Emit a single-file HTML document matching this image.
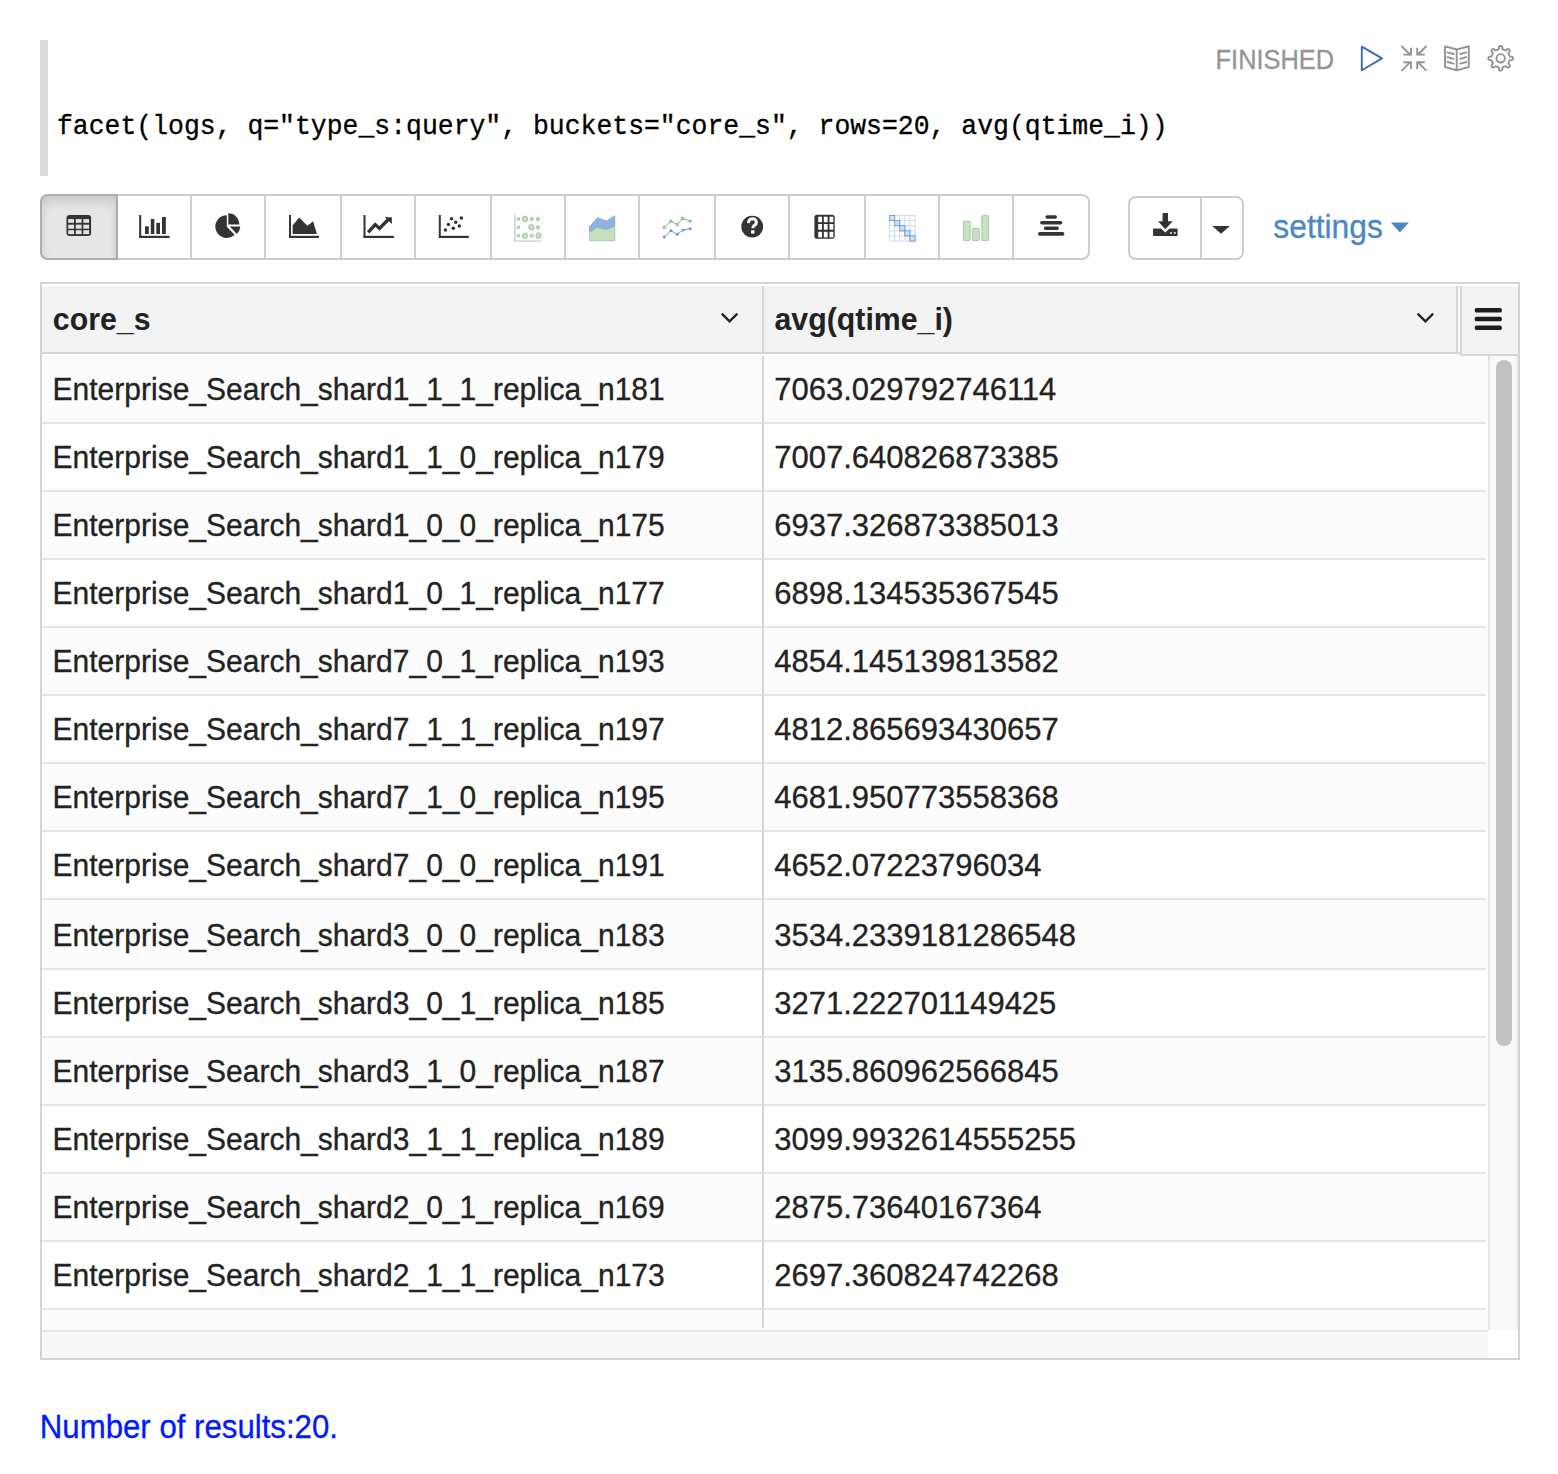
<!DOCTYPE html>
<html><head><meta charset="utf-8"><title>Zeppelin paragraph</title>
<style>
html,body{margin:0;padding:0;background:#fff;}
body{width:1558px;height:1474px;position:relative;overflow:hidden;font-family:"Liberation Sans",sans-serif;color:#222;}
.a{position:absolute;}
.t{position:absolute;line-height:1;white-space:pre;-webkit-text-stroke:0.3px currentColor;}
.sy{transform:scaleY(1.055);transform-origin:0 84.65%;}
svg{position:absolute;left:0;top:0;overflow:visible;}
</style></head>
<body>
<div class="a" style="left:40px;top:40px;width:8px;height:136px;background:#dcdcdc"></div>
<div class="t" style="left:57px;top:114.0px;font-family:'Liberation Mono',monospace;font-size:26.45px;color:#000;transform:scaleY(1.07);transform-origin:0 20px">facet(logs, q=&quot;type_s:query&quot;, buckets=&quot;core_s&quot;, rows=20, avg(qtime_i))</div>
<div class="t sy" style="left:1215.6px;top:48.3px;font-size:25.4px;color:#959595">FINISHED</div>
<svg width="1558" height="280" viewBox="0 0 1558 280">
<g fill="none" stroke-linecap="round" stroke-linejoin="round">
<path d="M1361.8 46.6 L1382 58.4 L1361.8 70.2 Z" stroke="#3a6fa8" stroke-width="1.9"/>
<g stroke="#929292" stroke-width="1.9" stroke-linecap="butt" stroke-linejoin="miter">
<path d="M1401.5 46 L1410 54.5 M1403.4 54.6 H1411 V47.8"/>
<path d="M1426.5 46 L1418 54.5 M1424.8 54.6 H1417.2 V47.8"/>
<path d="M1401.5 70.8 L1410 62.3 M1403.4 62.2 H1411 V69"/>
<path d="M1426.5 70.8 L1418 62.3 M1424.8 62.2 H1417.2 V69"/>
</g>
<g stroke="#929292" stroke-width="1.9">
<path d="M1456.7 49.5 L1445 46.3 V67 L1456.7 70.4 L1468.8 67 V46.3 Z M1456.7 49.5 V70.4"/>
<path d="M1447.5 52.4 L1453.6 54 M1447.5 57.2 L1453.6 58.8 M1447.5 62 L1453.6 63.6 M1460.2 54 L1466.2 52.4 M1460.2 58.8 L1466.2 57.2 M1460.2 63.6 L1466.2 62"/>
<path d="M1498.91 49.11 L1498.91 47.75 A1.75 1.75 0 0 1 1502.41 47.75 L1502.41 49.11 Q1503.99 50.31 1505.95 50.58 L1506.92 49.62 A1.75 1.75 0 0 1 1509.39 52.09 L1508.43 53.06 Q1508.70 55.02 1509.90 56.60 L1511.26 56.60 A1.75 1.75 0 0 1 1511.26 60.10 L1509.90 60.10 Q1508.70 61.68 1508.43 63.64 L1509.39 64.61 A1.75 1.75 0 0 1 1506.92 67.08 L1505.95 66.12 Q1503.99 66.39 1502.41 67.59 L1502.41 68.95 A1.75 1.75 0 0 1 1498.91 68.95 L1498.91 67.59 Q1497.33 66.39 1495.37 66.12 L1494.40 67.08 A1.75 1.75 0 0 1 1491.93 64.61 L1492.89 63.64 Q1492.62 61.68 1491.42 60.10 L1490.06 60.10 A1.75 1.75 0 0 1 1490.06 56.60 L1491.42 56.60 Q1492.62 55.02 1492.89 53.06 L1491.93 52.09 A1.75 1.75 0 0 1 1494.40 49.62 L1495.37 50.58 Q1497.33 50.31 1498.91 49.11 Z"/>
<circle cx="1500.66" cy="58.35" r="4.2"/>
</g>
</g>
<defs><linearGradient id="shd" x1="0" y1="0" x2="0" y2="1"><stop offset="0" stop-color="#cdcdcd"/><stop offset="0.25" stop-color="#e2e2e2"/><stop offset="1" stop-color="#e6e6e6"/></linearGradient></defs>
<rect x="41" y="195" width="1048" height="64" rx="7" ry="7" fill="#fff" stroke="#ccc" stroke-width="2"/>
<rect x="190" y="194" width="2" height="66" fill="#ccc"/>
<rect x="264" y="194" width="2" height="66" fill="#ccc"/>
<rect x="340" y="194" width="2" height="66" fill="#ccc"/>
<rect x="414" y="194" width="2" height="66" fill="#ccc"/>
<rect x="490" y="194" width="2" height="66" fill="#ccc"/>
<rect x="564" y="194" width="2" height="66" fill="#ccc"/>
<rect x="638" y="194" width="2" height="66" fill="#ccc"/>
<rect x="714" y="194" width="2" height="66" fill="#ccc"/>
<rect x="788" y="194" width="2" height="66" fill="#ccc"/>
<rect x="864" y="194" width="2" height="66" fill="#ccc"/>
<rect x="938" y="194" width="2" height="66" fill="#ccc"/>
<rect x="1012" y="194" width="2" height="66" fill="#ccc"/>
<g fill="#333"><rect x="139.2" y="215" width="2" height="23"/><rect x="139.2" y="235.8" width="30.4" height="2.2"/><rect x="145" y="226.3" width="3.8" height="7.7"/><rect x="150.8" y="219" width="3.5" height="15"/><rect x="156.3" y="222.8" width="3.7" height="11.2"/><rect x="162" y="217" width="3.8" height="17"/></g>
<g fill="#333"><path d="M226.8 215.2 V226.8 L234.6 234.8 A11.4 11.4 0 1 1 226.8 215.2 Z"/><path d="M228.3 213.3 A11 11 0 0 1 239.3 224.6 H228.3 Z"/><path d="M229.8 226.6 H240.3 A11 11 0 0 1 236.8 234 Z"/></g>
<g fill="#333"><rect x="289" y="215" width="2" height="23"/><rect x="289" y="235.8" width="30" height="2.2"/><path d="M292.6 233.9 V225.4 L299.2 217.4 L307.4 225.8 L313.1 221.2 L316.9 233.9 Z"/></g>
<g fill="#333"><rect x="363.5" y="215" width="2" height="23"/><rect x="363.5" y="235.8" width="30.4" height="2.2"/><path d="M384.7 217.2 H391.8 V224 Z"/></g><path d="M368.2 232.3 L375.2 224.6 L379.5 228.4 L388.5 219.3" fill="none" stroke="#333" stroke-width="3.4"/>
<g fill="#333"><rect x="438.8" y="215" width="2" height="23"/><rect x="438.8" y="235.8" width="30" height="2.2"/><circle cx="445.4" cy="230.1" r="1.75"/><circle cx="448.4" cy="224.4" r="1.75"/><circle cx="451.5" cy="218.8" r="1.75"/><circle cx="453.3" cy="228.2" r="1.75"/><circle cx="455.7" cy="222.2" r="1.75"/><circle cx="459.3" cy="226.1" r="1.75"/><circle cx="461.4" cy="218.0" r="1.75"/></g>
<path d="M514.8 214.8 V241 H541" fill="none" stroke="#b7bfd6" stroke-width="1.2"/><g fill="#c8e2c2" stroke="#86b882" stroke-width="0.8"><circle cx="518.4" cy="219.0" r="1.4"/><circle cx="525.0" cy="219.0" r="2.7"/><circle cx="531.7" cy="219.0" r="1.6"/><circle cx="538.0" cy="219.0" r="1.6"/><circle cx="518.4" cy="227.3" r="1.3"/><circle cx="531.4" cy="227.3" r="2.7"/><circle cx="538.0" cy="227.3" r="1.6"/><circle cx="518.4" cy="235.7" r="1.4"/><circle cx="525.0" cy="235.7" r="2.7"/><circle cx="531.7" cy="235.7" r="1.6"/><circle cx="538.5" cy="235.7" r="2.7"/></g>
<path d="M589.4 226.8 L597.4 217.7 L606.6 220.9 L614.8 215.8 V226.1 L606.6 229.7 L597.4 227.5 L589.4 232.2 Z" fill="#8fb2e6" stroke="#6f95d0" stroke-width="0.6"/><path d="M589.4 232.2 L597.4 227.5 L606.6 229.7 L614.8 226.1 V240.7 H589.4 Z" fill="#c6e1c1" stroke="#8cbc88" stroke-width="0.6"/>
<path d="M664.2 227.5 L670.9 221.2 L677.2 224.7 L682.6 218.4 L690.2 221.2" fill="none" stroke="#6fa872" stroke-width="0.9"/><path d="M664.2 237.0 L670.9 230.8 L677.2 234.3 L683.1 229.9 L690.2 228.7" fill="none" stroke="#5f8ad6" stroke-width="0.9"/><g fill="#b9dcb6" stroke="#6fae6c" stroke-width="0.8"><circle cx="664.2" cy="227.5" r="1.3"/><circle cx="670.9" cy="221.2" r="1.3"/><circle cx="677.2" cy="224.7" r="1.3"/><circle cx="682.6" cy="218.4" r="1.3"/><circle cx="690.2" cy="221.2" r="1.3"/></g><g fill="#6a92da"><circle cx="664.2" cy="237.0" r="1.5"/><circle cx="670.9" cy="230.8" r="1.5"/><circle cx="677.2" cy="234.3" r="1.5"/><circle cx="683.1" cy="229.9" r="1.5"/><circle cx="690.2" cy="228.7" r="1.5"/></g>
<circle cx="752.2" cy="226.6" r="10.9" fill="#333"/><path d="M748.4 223.1 Q748.8 218.8 752.4 218.8 Q756.4 218.9 756.3 222.4 Q756.2 224.6 753.9 225.7 Q752.9 226.3 752.9 228.3" fill="none" stroke="#fff" stroke-width="3"/><rect x="751.1" y="230.3" width="3.4" height="3.3" fill="#fff"/>
<rect x="814.4" y="214.8" width="20.3" height="24" rx="2.5" fill="#333"/><rect x="818.2" y="216.7" width="3.8" height="5.5" fill="#fff"/><rect x="818.2" y="224.0" width="3.8" height="5.7" fill="#fff"/><rect x="818.2" y="231.8" width="3.8" height="5.6" fill="#fff"/><rect x="823.8" y="216.7" width="3.8" height="5.5" fill="#fff"/><rect x="823.8" y="224.0" width="3.8" height="5.7" fill="#fff"/><rect x="823.8" y="231.8" width="3.8" height="5.6" fill="#fff"/><rect x="829.5" y="216.7" width="3.8" height="5.5" fill="#fff"/><rect x="829.5" y="224.0" width="3.8" height="5.7" fill="#fff"/><rect x="829.5" y="231.8" width="3.8" height="5.6" fill="#fff"/>
<g><rect x="889.5" y="215.5" width="5.1" height="5.1" fill="#c9e4fb" stroke="#7a9ad6" stroke-width="0.9"/><rect x="894.6" y="220.6" width="5.1" height="5.1" fill="#c9e4fb" stroke="#7a9ad6" stroke-width="0.9"/><rect x="899.7" y="225.7" width="5.1" height="5.1" fill="#c9e4fb" stroke="#7a9ad6" stroke-width="0.9"/><rect x="904.8" y="230.8" width="5.1" height="5.1" fill="#c9e4fb" stroke="#7a9ad6" stroke-width="0.9"/><rect x="909.9" y="235.9" width="5.1" height="5.1" fill="#c9e4fb" stroke="#7a9ad6" stroke-width="0.9"/><path d="M889.5 215.5 V241.0 M889.5 215.5 H915.0 M894.6 215.5 V241.0 M889.5 220.6 H915.0 M899.7 215.5 V241.0 M889.5 225.7 H915.0 M904.8 215.5 V241.0 M889.5 230.8 H915.0 M909.9 215.5 V241.0 M889.5 235.9 H915.0 M915.0 215.5 V241.0 M889.5 241.0 H915.0" fill="none" stroke="#c5d1e6" stroke-width="0.8"/><rect x="889.5" y="215.5" width="5.1" height="5.1" fill="#c9e4fb" stroke="#7a9ad6" stroke-width="0.9"/><rect x="894.6" y="220.6" width="5.1" height="5.1" fill="#c9e4fb" stroke="#7a9ad6" stroke-width="0.9"/><rect x="899.7" y="225.7" width="5.1" height="5.1" fill="#c9e4fb" stroke="#7a9ad6" stroke-width="0.9"/><rect x="904.8" y="230.8" width="5.1" height="5.1" fill="#c9e4fb" stroke="#7a9ad6" stroke-width="0.9"/><rect x="909.9" y="235.9" width="5.1" height="5.1" fill="#c9e4fb" stroke="#7a9ad6" stroke-width="0.9"/></g>
<g fill="#c6e1c1" stroke="#97c393" stroke-width="0.8"><rect x="963.3" y="221.2" width="6.9" height="19.3" rx="0.8"/><rect x="972.4" y="228.3" width="6.9" height="12.2" rx="0.8"/><rect x="981.8" y="215.4" width="6.9" height="25.1" rx="0.8"/></g>
<g stroke="#333" stroke-width="3.6" stroke-linecap="round"><path d="M1047.2 217 H1055.2 M1041.9 222.8 H1060.6 M1045.6 228.2 H1057.1 M1039.8 233.9 H1062.6"/></g>
<rect x="1129" y="197" width="114" height="62" rx="7" ry="7" fill="#fff" stroke="#ccc" stroke-width="2"/><rect x="1200" y="196" width="2" height="64" fill="#ccc"/>
<g fill="#333"><rect x="1162.6" y="213" width="5.4" height="10" rx="0.8"/><path d="M1158 221.3 H1172.7 L1165.3 229.2 Z"/><path d="M1154.2 228.4 H1161 L1165.3 232.4 L1169.6 228.4 H1176.6 Q1177.6 228.4 1177.6 229.4 V235 Q1177.6 235.9 1176.6 235.9 H1154 Q1153 235.9 1153 235 V229.4 Q1153 228.4 1154.2 228.4 Z"/></g><g fill="#fff"><rect x="1170.1" y="232.2" width="1.7" height="1.7"/><rect x="1173.9" y="232.2" width="1.7" height="1.7"/></g>
<path d="M1212.2 226 H1229.8 L1221 233.8 Z" fill="#333"/>
<path d="M1390.9 222.6 H1408.9 L1399.9 232.6 Z" fill="#4b87c5"/>
</svg>
<div class="a" style="left:40px;top:194px;width:74px;height:62px;border:2px solid #adadad;border-radius:8px 0 0 8px;background:#e6e6e6;box-shadow:inset 0 6px 10px rgba(0,0,0,.125)"></div>
<svg width="200" height="280"><rect x="66.5" y="215" width="24.6" height="21" rx="3" fill="#333"/>
<rect x="68.2" y="219.1" width="5.8" height="3.7" fill="#e4e4e4"/><rect x="68.2" y="224.7" width="5.8" height="4.0" fill="#e4e4e4"/><rect x="68.2" y="230.2" width="5.8" height="3.9" fill="#e4e4e4"/><rect x="75.8" y="219.1" width="5.8" height="3.7" fill="#e4e4e4"/><rect x="75.8" y="224.7" width="5.8" height="4.0" fill="#e4e4e4"/><rect x="75.8" y="230.2" width="5.8" height="3.9" fill="#e4e4e4"/><rect x="83.3" y="219.1" width="5.8" height="3.7" fill="#e4e4e4"/><rect x="83.3" y="224.7" width="5.8" height="4.0" fill="#e4e4e4"/><rect x="83.3" y="230.2" width="5.8" height="3.9" fill="#e4e4e4"/>
</svg>
<div class="t sy" style="left:1273.3px;top:212.4px;font-size:31.8px;color:#4b87c5">settings</div>
<div class="a" style="left:40px;top:282px;width:1476px;height:1074px;border:2px solid #d4d4d4;background:#fff"></div>
<div class="a" style="left:42px;top:286px;width:1418px;height:66px;background:#f3f3f3"></div>
<div class="a" style="left:42px;top:352px;width:1418px;height:2px;background:#d4d4d4"></div>
<div class="a" style="left:762px;top:286px;width:2px;height:66px;background:#d4d4d4"></div>
<div class="a" style="left:1456px;top:286px;width:2px;height:66px;background:#d4d4d4"></div>
<div class="a" style="left:1458px;top:286px;width:2px;height:66px;background:#f8f8f8"></div>
<div class="t sy" style="left:52.8px;top:305.15105px;font-size:30.3px;font-weight:bold;color:#222;-webkit-text-stroke:0">core_s</div>
<div class="t sy" style="left:774.5px;top:305.15105px;font-size:30.3px;font-weight:bold;color:#222;-webkit-text-stroke:0">avg(qtime_i)</div>
<div class="a" style="left:42px;top:354px;width:1446px;height:68px;background:#fcfcfc"></div><div class="a" style="left:42px;top:422px;width:1444px;height:2px;background:#e5e5e5"></div><div class="t sy" style="left:52.6px;top:374.6px;font-size:30px">Enterprise_Search_shard1_1_1_replica_n181</div><div class="t" style="left:774.2px;top:373.8px;font-size:31px">7063.029792746114</div>
<div class="a" style="left:42px;top:424px;width:1446px;height:66px;background:#fff"></div><div class="a" style="left:42px;top:490px;width:1444px;height:2px;background:#e5e5e5"></div><div class="t sy" style="left:52.6px;top:442.6px;font-size:30px">Enterprise_Search_shard1_1_0_replica_n179</div><div class="t" style="left:774.2px;top:441.8px;font-size:31px">7007.640826873385</div>
<div class="a" style="left:42px;top:492px;width:1446px;height:66px;background:#fcfcfc"></div><div class="a" style="left:42px;top:558px;width:1444px;height:2px;background:#e5e5e5"></div><div class="t sy" style="left:52.6px;top:510.6px;font-size:30px">Enterprise_Search_shard1_0_0_replica_n175</div><div class="t" style="left:774.2px;top:509.8px;font-size:31px">6937.326873385013</div>
<div class="a" style="left:42px;top:560px;width:1446px;height:66px;background:#fff"></div><div class="a" style="left:42px;top:626px;width:1444px;height:2px;background:#e5e5e5"></div><div class="t sy" style="left:52.6px;top:578.6px;font-size:30px">Enterprise_Search_shard1_0_1_replica_n177</div><div class="t" style="left:774.2px;top:577.8px;font-size:31px">6898.134535367545</div>
<div class="a" style="left:42px;top:628px;width:1446px;height:66px;background:#fcfcfc"></div><div class="a" style="left:42px;top:694px;width:1444px;height:2px;background:#e5e5e5"></div><div class="t sy" style="left:52.6px;top:646.6px;font-size:30px">Enterprise_Search_shard7_0_1_replica_n193</div><div class="t" style="left:774.2px;top:645.8px;font-size:31px">4854.145139813582</div>
<div class="a" style="left:42px;top:696px;width:1446px;height:66px;background:#fff"></div><div class="a" style="left:42px;top:762px;width:1444px;height:2px;background:#e5e5e5"></div><div class="t sy" style="left:52.6px;top:714.6px;font-size:30px">Enterprise_Search_shard7_1_1_replica_n197</div><div class="t" style="left:774.2px;top:713.8px;font-size:31px">4812.865693430657</div>
<div class="a" style="left:42px;top:764px;width:1446px;height:66px;background:#fcfcfc"></div><div class="a" style="left:42px;top:830px;width:1444px;height:2px;background:#e5e5e5"></div><div class="t sy" style="left:52.6px;top:782.6px;font-size:30px">Enterprise_Search_shard7_1_0_replica_n195</div><div class="t" style="left:774.2px;top:781.8px;font-size:31px">4681.950773558368</div>
<div class="a" style="left:42px;top:832px;width:1446px;height:66px;background:#fff"></div><div class="a" style="left:42px;top:898px;width:1444px;height:2px;background:#e5e5e5"></div><div class="t sy" style="left:52.6px;top:850.6px;font-size:30px">Enterprise_Search_shard7_0_0_replica_n191</div><div class="t" style="left:774.2px;top:849.8px;font-size:31px">4652.07223796034</div>
<div class="a" style="left:42px;top:900px;width:1446px;height:68px;background:#fcfcfc"></div><div class="a" style="left:42px;top:968px;width:1444px;height:2px;background:#e5e5e5"></div><div class="t sy" style="left:52.6px;top:920.6px;font-size:30px">Enterprise_Search_shard3_0_0_replica_n183</div><div class="t" style="left:774.2px;top:919.8px;font-size:31px">3534.2339181286548</div>
<div class="a" style="left:42px;top:970px;width:1446px;height:66px;background:#fff"></div><div class="a" style="left:42px;top:1036px;width:1444px;height:2px;background:#e5e5e5"></div><div class="t sy" style="left:52.6px;top:988.6px;font-size:30px">Enterprise_Search_shard3_0_1_replica_n185</div><div class="t" style="left:774.2px;top:987.8px;font-size:31px">3271.222701149425</div>
<div class="a" style="left:42px;top:1038px;width:1446px;height:66px;background:#fcfcfc"></div><div class="a" style="left:42px;top:1104px;width:1444px;height:2px;background:#e5e5e5"></div><div class="t sy" style="left:52.6px;top:1056.6px;font-size:30px">Enterprise_Search_shard3_1_0_replica_n187</div><div class="t" style="left:774.2px;top:1055.8px;font-size:31px">3135.860962566845</div>
<div class="a" style="left:42px;top:1106px;width:1446px;height:66px;background:#fff"></div><div class="a" style="left:42px;top:1172px;width:1444px;height:2px;background:#e5e5e5"></div><div class="t sy" style="left:52.6px;top:1124.6px;font-size:30px">Enterprise_Search_shard3_1_1_replica_n189</div><div class="t" style="left:774.2px;top:1123.8px;font-size:31px">3099.9932614555255</div>
<div class="a" style="left:42px;top:1174px;width:1446px;height:66px;background:#fcfcfc"></div><div class="a" style="left:42px;top:1240px;width:1444px;height:2px;background:#e5e5e5"></div><div class="t sy" style="left:52.6px;top:1192.6px;font-size:30px">Enterprise_Search_shard2_0_1_replica_n169</div><div class="t" style="left:774.2px;top:1191.8px;font-size:31px">2875.73640167364</div>
<div class="a" style="left:42px;top:1242px;width:1446px;height:66px;background:#fff"></div><div class="a" style="left:42px;top:1308px;width:1444px;height:2px;background:#e5e5e5"></div><div class="t sy" style="left:52.6px;top:1260.6px;font-size:30px">Enterprise_Search_shard2_1_1_replica_n173</div><div class="t" style="left:774.2px;top:1259.8px;font-size:31px">2697.360824742268</div>
<div class="a" style="left:42px;top:1310px;width:1446px;height:20px;background:#fcfcfc"></div>
<div class="a" style="left:762px;top:356px;width:2px;height:972px;background:#d4d4d4"></div>
<div class="a" style="left:1488px;top:356px;width:26px;height:974px;border-left:2px solid #e4e4e4;border-right:2px solid #efefef;background:#f9f9f9"></div>
<div class="a" style="left:1496px;top:360px;width:16px;height:686px;border-radius:8px;background:#c1c1c1"></div>
<div class="a" style="left:42px;top:1330px;width:1446px;height:28px;border-top:2px solid #e4e4e4;background:#f8f8f8;box-sizing:border-box"></div>
<div class="a" style="left:1488px;top:1330px;width:30px;height:28px;background:#fff"></div>
<div class="a" style="left:1460px;top:286px;width:56px;height:68px;border-left:2px solid #d4d4d4;border-bottom:2px solid #d4d4d4;background:#f3f3f3"></div>
<svg width="1558" height="400"><g fill="#1e1e1e"><rect x="1474.8" y="307.9" width="27" height="4.6" rx="1.6"/><rect x="1474.8" y="316.7" width="27" height="4.6" rx="1.6"/><rect x="1474.8" y="325.4" width="27" height="4.6" rx="1.6"/></g><g fill="none" stroke="#222" stroke-width="2.3"><path d="M721.8 313.6 L729.6 321.4 L737.4 313.6"/><path d="M1417.6 313.6 L1425.4 321.4 L1433.2 313.6"/></g></svg>
<div class="t sy" style="left:39.8px;top:1412.3px;font-size:31.2px;color:#0019ff">Number of results:20.</div>
</body></html>
